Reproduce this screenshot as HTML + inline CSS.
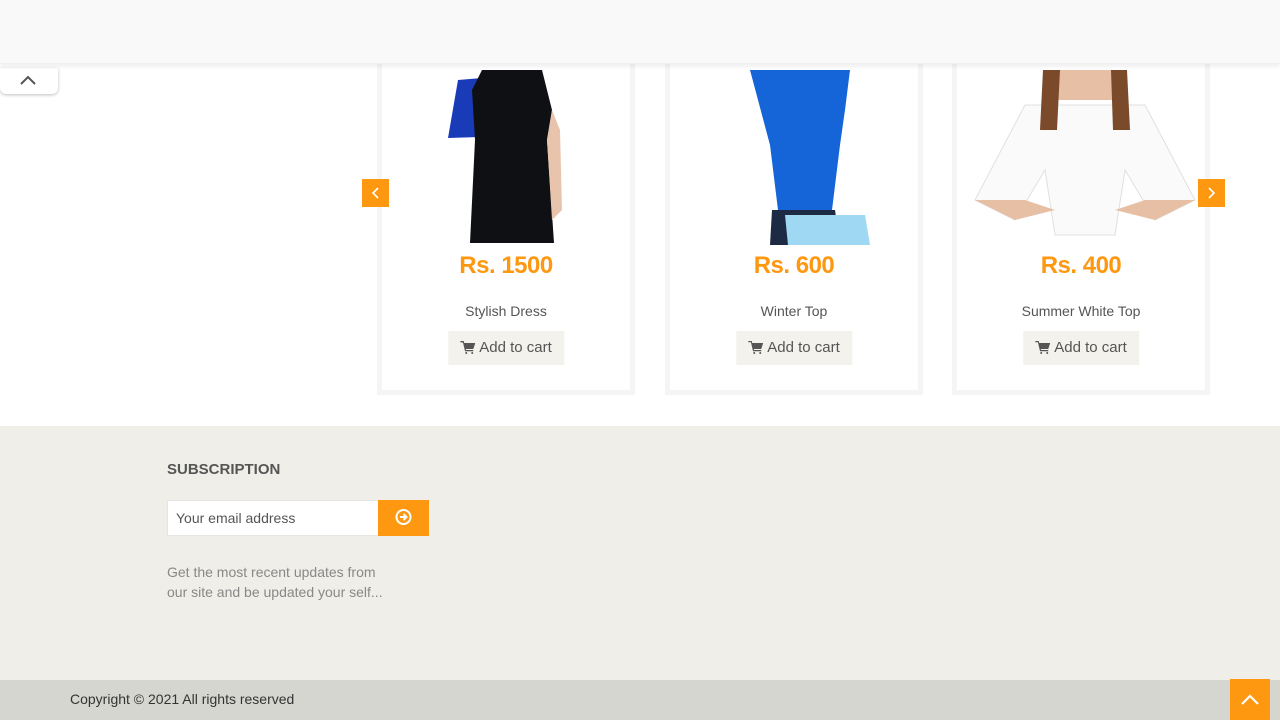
<!DOCTYPE html>
<html><head><meta charset="utf-8"><style>
*{margin:0;padding:0;box-sizing:border-box}
body{width:1280px;height:720px;overflow:hidden;background:#fff;font-family:"Liberation Sans",Roboto,sans-serif;position:relative}
.hdr{position:absolute;left:0;top:0;width:1280px;height:64px;background:#f9f9f9;border-bottom:1px solid #eee;box-shadow:0 3px 4px rgba(0,0,0,.06);z-index:5}
.tab{position:absolute;left:0;top:68px;width:58px;height:26px;background:#fff;border-radius:0 0 6px 6px;box-shadow:0 1px 3px rgba(0,0,0,.25);z-index:4}
.card{position:absolute;top:40px;width:258px;height:355px;border:5px solid #f5f5f5;border-top:none;background:#fff}
.price{position:absolute;top:212px;width:100%;text-align:center;color:#ff9811;font-weight:bold;font-size:24px;letter-spacing:-0.5px}
.name{position:absolute;top:263px;width:100%;text-align:center;color:#555;font-size:14px}
.btn{position:absolute;top:291px;left:50%;transform:translateX(-50%);background:#f3f2ec;color:#555;font-size:15px;height:34px;line-height:34px;padding:0 12px;white-space:nowrap}
.btn svg{vertical-align:-2px;margin-right:4px}
.arr{position:absolute;top:179px;width:27px;height:28px;background:#ff9811;z-index:3}
.foot{position:absolute;left:0;top:426px;width:1280px;height:254px;background:#efeee8}
.bar{position:absolute;left:0;top:680px;width:1280px;height:40px;background:#d6d6d1;font-size:14px;color:#333;line-height:38px;padding-left:70px}
</style></head><body>
<div class="hdr"></div>
<div class="tab"><svg width="58" height="26"><path d="M21 16 L28 9 L35 16" stroke="#555" stroke-width="2" fill="none"/></svg></div>

<div class="card" style="left:377px">
 <svg style="position:absolute;left:60px;top:30px" width="130" height="175"><path d="M16 10 L40 8 L38 67 L6 68 Z" fill="#1a3bb8"/><path d="M40 0 L100 0 L110 40 L105 70 L112 173 L28 173 L33 70 L30 20 Z" fill="#0f1014"/><path d="M110 40 L118 60 L120 140 L110 150 L105 70 Z" fill="#e8c4ad"/></svg>
 <div class="price">Rs. 1500</div><div class="name">Stylish Dress</div>
 <div class="btn"><svg width="15" height="13" viewBox="0 0 15 13"><path d="M0 1h3l2 7h8l2-6H4" fill="#555"/><path d="M0 0h3.5l.5 2H15l-2 6H5.5l.3 1H13v1.3H4.8L2.7 1.3H0z" fill="#555"/><circle cx="6" cy="12" r="1" fill="#555"/><circle cx="12" cy="12" r="1" fill="#555"/></svg>Add to cart</div>
</div>
<div class="card" style="left:665px">
 <svg style="position:absolute;left:70px;top:30px" width="140" height="175"><path d="M10 0 L110 0 L105 40 L100 75 L92 140 L38 140 L30 75 Z" fill="#1565d8"/><path d="M32 140 L95 140 L100 175 L30 175 Z" fill="#1d2a44"/><path d="M45 145 L125 145 L130 175 L48 175 Z" fill="#9fd8f2"/></svg>
 <div class="price">Rs. 600</div><div class="name">Winter Top</div>
 <div class="btn"><svg width="15" height="13" viewBox="0 0 15 13"><path d="M0 0h3.5l.5 2H15l-2 6H5.5l.3 1H13v1.3H4.8L2.7 1.3H0z" fill="#555"/><circle cx="6" cy="12" r="1" fill="#555"/><circle cx="12" cy="12" r="1" fill="#555"/></svg>Add to cart</div>
</div>
<div class="card" style="left:952px">
 <svg style="position:absolute;left:8px;top:30px" width="240" height="175"><path d="M90 0 L150 0 L150 30 L90 30Z" fill="#e6bfa5"/><path d="M60 35 L180 35 L230 130 L190 150 L160 100 L150 165 L90 165 L80 100 L50 150 L10 130 Z" fill="#fafafa" stroke="#e0e0e0"/><path d="M10 130 L50 150 L90 140 L60 130Z M230 130 L190 150 L150 140 L180 130Z" fill="#e6bfa5"/><path d="M78 0 L95 0 L92 60 L75 60Z M146 0 L162 0 L165 60 L148 60Z" fill="#7a4a2a"/></svg>
 <div class="price">Rs. 400</div><div class="name">Summer White Top</div>
 <div class="btn"><svg width="15" height="13" viewBox="0 0 15 13"><path d="M0 0h3.5l.5 2H15l-2 6H5.5l.3 1H13v1.3H4.8L2.7 1.3H0z" fill="#555"/><circle cx="6" cy="12" r="1" fill="#555"/><circle cx="12" cy="12" r="1" fill="#555"/></svg>Add to cart</div>
</div>
<div class="arr" style="left:362px"><svg width="27" height="28"><path d="M16 9 L11 14 L16 19" stroke="#fff" stroke-width="1.6" fill="none"/></svg></div>
<div class="arr" style="left:1198px"><svg width="27" height="28"><path d="M11 9 L16 14 L11 19" stroke="#fff" stroke-width="1.6" fill="none"/></svg></div>

<div class="foot">
 <div style="position:absolute;left:167px;top:35px;font-size:15px;font-weight:bold;color:#555">SUBSCRIPTION</div>
 <div style="position:absolute;left:167px;top:74px;width:212px;height:36px;background:#fff;border:1px solid #e6e5df;font-size:14px;color:#555;line-height:34px;padding-left:8px">Your email address</div>
 <div style="position:absolute;left:378px;top:74px;width:51px;height:36px;background:#ff9811"><svg width="51" height="36"><circle cx="25.5" cy="17" r="7" stroke="#fff" stroke-width="2" fill="none"/><path d="M22 17h6M25.5 14l3 3-3 3" stroke="#fff" stroke-width="2" fill="none"/></svg></div>
 <div style="position:absolute;left:167px;top:136px;font-size:14px;color:#888;line-height:20px">Get the most recent updates from<br>our site and be updated your self...</div>
</div>
<div class="bar">Copyright © 2021 All rights reserved</div>
<div style="position:absolute;left:1230px;top:679px;width:40px;height:41px;background:#ff9811"><svg width="40" height="41"><path d="M12 25 L20 17 L28 25" stroke="#fff" stroke-width="2.2" fill="none"/></svg></div>
</body></html>
